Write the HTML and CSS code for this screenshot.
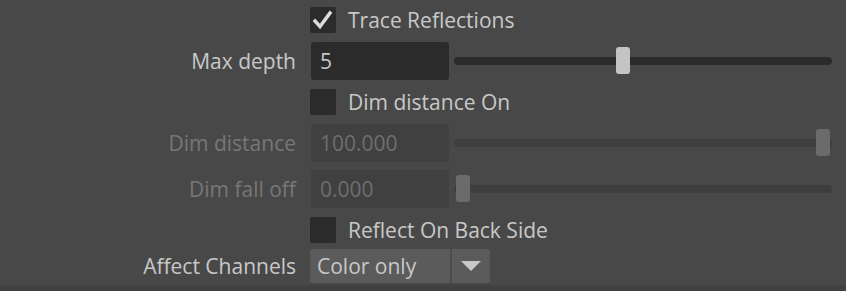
FILE: index.html
```html
<!DOCTYPE html>
<html>
  <head>
    <title>Trace Reflections</title>
    <link rel="stylesheet" href="styles.css">
  </head>
  <body>
    <div class="panel">
      <div class="row row-check first">
        <span class="label"></span>
        <label class="check">
          <span class="box">
            <svg width="26" height="26" viewBox="0 0 26 26">
              <path d="M5 14 L10 19.5 L20 6" fill="none" stroke="#dcdcdc" stroke-width="3.4" stroke-linecap="square"/>
            </svg>
          </span>
          <span>Trace Reflections</span>
        </label>
      </div>

      <div class="row row-field">
        <span class="label">Max depth</span>
        <div class="field">5</div>
        <div class="slider">
          <div class="track"></div>
          <div class="handle" style="left: 162px"></div>
        </div>
      </div>

      <div class="row row-check">
        <span class="label"></span>
        <label class="check">
          <span class="box"></span>
          <span>Dim distance On</span>
        </label>
      </div>

      <div class="row row-field disabled">
        <span class="label">Dim distance</span>
        <div class="field">100.000</div>
        <div class="slider">
          <div class="track"></div>
          <div class="handle" style="left: 362px"></div>
        </div>
      </div>

      <div class="row row-field disabled tight">
        <span class="label">Dim fall off</span>
        <div class="field">0.000</div>
        <div class="slider">
          <div class="track"></div>
          <div class="handle" style="left: 2px"></div>
        </div>
      </div>

      <div class="row row-check">
        <span class="label"></span>
        <label class="check">
          <span class="box"></span>
          <span>Reflect On Back Side</span>
        </label>
      </div>

      <div class="row row-menu">
        <span class="label">Affect Channels</span>
        <div class="menu">
          <span class="menu-text">Color only</span>
          <span class="menu-arrow">
            <svg width="20" height="10" viewBox="0 0 20 10">
              <path d="M0 0 H20 L10 10 Z" fill="#c8c8c8"/>
            </svg>
          </span>
        </div>
      </div>
    </div>
    <div class="bottom"></div>
  </body>
</html>
```

FILE: styles.css
```css
html, body {
  margin: 0;
  height: 100%;
}

body {
  background-color: #484848;
  color: #c8c8c8;
  font-family: "Open Sans", "Noto Sans", sans-serif;
  font-size: 21px;
  display: flex;
  flex-direction: column;
}

.panel {
  flex-grow: 1;
  padding-top: 7px;
}

.row {
  display: flex;
  align-items: center;
  margin-top: 9px;
}

.row.first {
  margin-top: 0;
}

.row.tight {
  margin-top: 8px;
}

.row-check {
  height: 26px;
}

.row-field {
  height: 38px;
}

.row-menu {
  height: 34px;
  margin-top: 6px;
}

.label {
  width: 296px;
  flex-shrink: 0;
  text-align: right;
  margin-right: 14px;
  white-space: nowrap;
}

.check {
  display: flex;
  align-items: center;
}

.box {
  width: 26px;
  height: 26px;
  background-color: #2b2b2b;
  border-radius: 2px;
  margin-right: 12px;
  display: flex;
}

.field {
  width: 138px;
  height: 38px;
  margin-left: 1px;
  box-sizing: border-box;
  padding-left: 9px;
  line-height: 38px;
  background-color: #2b2b2b;
  border-radius: 3px;
}

.slider {
  position: relative;
  flex-grow: 1;
  height: 38px;
  margin-left: 5px;
  margin-right: 14px;
}

.track {
  position: absolute;
  left: 0;
  right: 0;
  top: 15px;
  height: 8px;
  border-radius: 4px;
  background-color: #2b2b2b;
}

.handle {
  position: absolute;
  top: 5px;
  width: 14px;
  height: 27px;
  border-radius: 3px;
  background-color: #c4c4c4;
}

.disabled .label {
  color: #777777;
}

.disabled .field {
  background-color: #404040;
  color: #6e6e6e;
}

.disabled .track {
  background-color: #3e3e3e;
}

.disabled .handle {
  background-color: #6b6b6b;
}

.menu {
  display: flex;
  width: 180px;
  height: 34px;
  background-color: #5b5b5b;
  border-radius: 3px;
}

.menu-text {
  flex-grow: 1;
  padding-left: 7px;
  line-height: 34px;
  border-right: 2px solid #4c4c4c;
}

.menu-arrow {
  width: 38px;
  display: flex;
  align-items: center;
  justify-content: center;
}

.bottom {
  height: 6px;
  background-color: #414141;
}
```
